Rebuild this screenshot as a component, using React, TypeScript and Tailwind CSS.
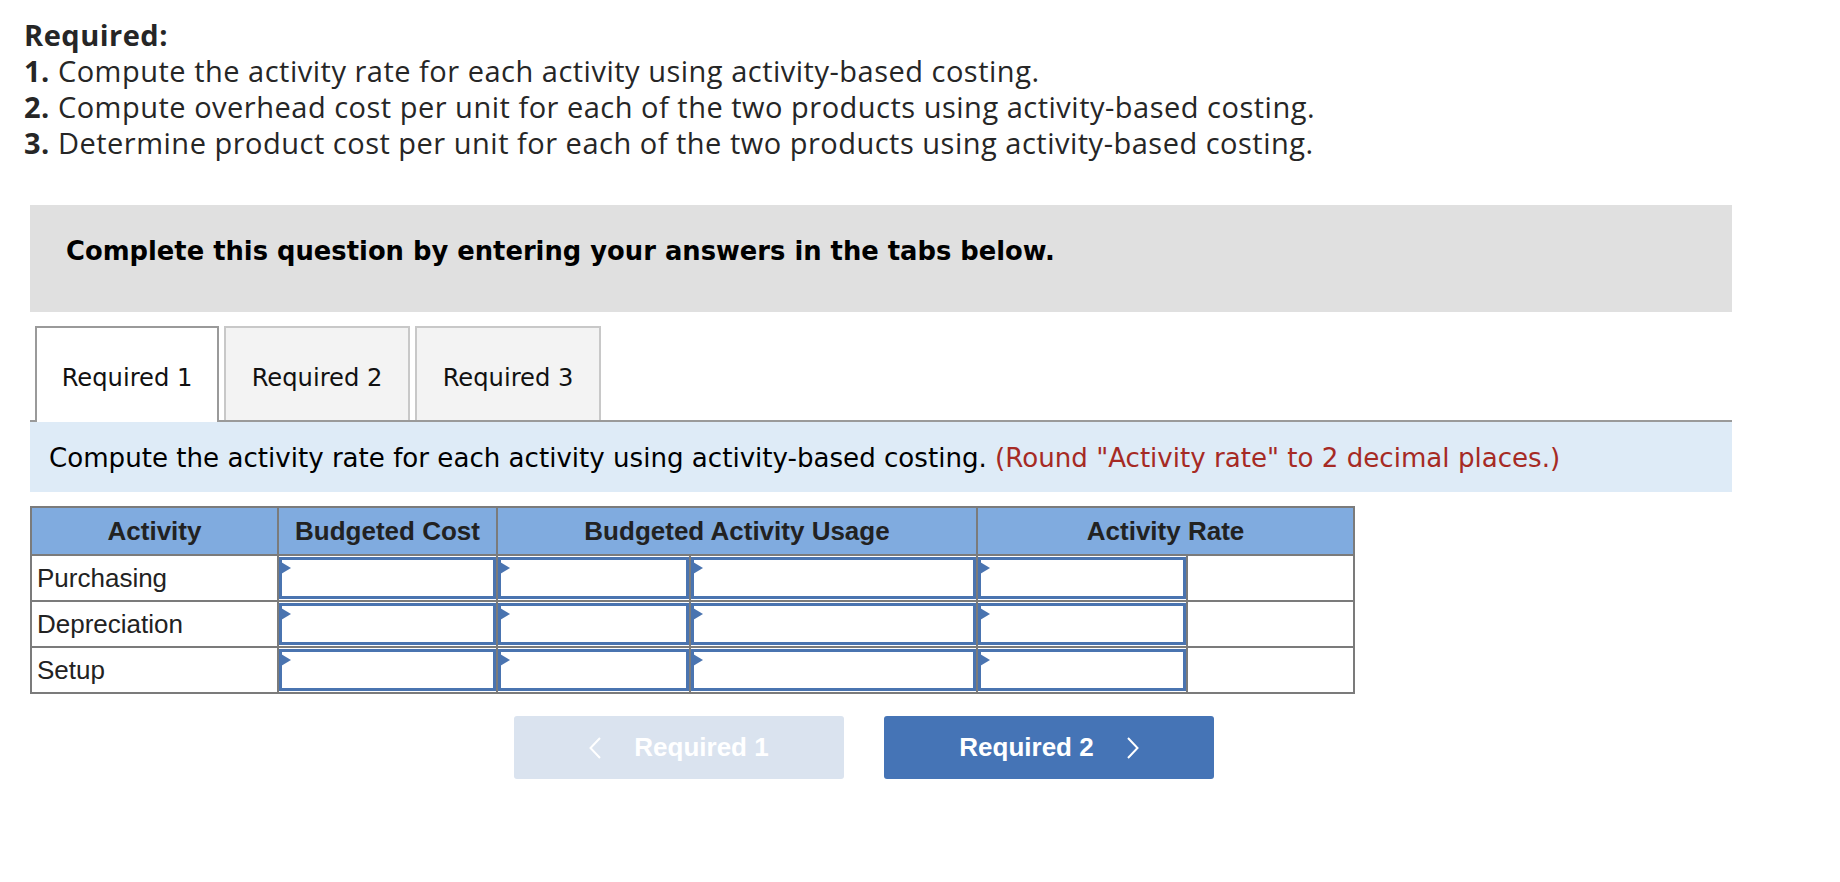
import React from 'react'

const questions = [
    { n: '1.', text: 'Compute the activity rate for each activity using activity-based costing.' },
    { n: '2.', text: 'Compute overhead cost per unit for each of the two products using activity-based costing.' },
    { n: '3.', text: 'Determine product cost per unit for each of the two products using activity-based costing.' },
]

const activities = ['Purchasing', 'Depreciation', 'Setup']

function InputCell() {
    return (
        <td className="p-0 border-2 border-[#7b7b7b]">
            <div className="relative h-[42px] border-[3px] border-[#4a74b0] bg-white">
                <span className="absolute left-[-1px] top-[2px] w-0 h-0 border-y-[6px] border-y-transparent border-l-[10px] border-l-[#4a74b0]" />
            </div>
        </td>
    )
}

function Chevron({ dir }: { dir: 'left' | 'right' }) {
    return (
        <svg width="12" height="22" viewBox="0 0 12 22" fill="none" stroke="white" strokeWidth="2">
            {dir === 'left' ? <polyline points="11,1 1.5,11 11,21" /> : <polyline points="1,1 10.5,11 1,21" />}
        </svg>
    )
}

export default function App() {
    return (
        <div className="min-h-screen w-full bg-white pt-[17px]">
            <div className="pl-[24px] font-['Open_Sans',sans-serif] text-[29px] tracking-[0.5px] leading-[36px] text-[#262626]">
                <p className="font-bold">Required:</p>
                {questions.map((q) => (
                    <p key={q.n}>
                        <span className="font-bold">{q.n}</span> {q.text}
                    </p>
                ))}
            </div>

            <div className="ml-[30px] mt-[44px] w-[1702px] h-[107px] bg-[#e0e0e0] pl-[36px] pt-[31px] font-['DejaVu_Sans',sans-serif] text-[25.8px] leading-[30px] font-bold text-black">
                Complete this question by entering your answers in the tabs below.
            </div>

            <div className="ml-[30px] mt-[14px] w-[1702px] flex gap-[5px] pl-[5px] border-b-2 border-[#9a9a9a] font-['DejaVu_Sans',sans-serif] text-[24.2px] leading-[28px] text-[#111]">
                <div className="w-[184px] h-[96px] -mb-[2px] border-2 border-b-0 border-[#9a9a9a] bg-white text-center pt-[36px]">
                    Required 1
                </div>
                <div className="w-[186px] h-[94px] border-2 border-b-0 border-[#c8c8c8] bg-[#f3f3f3] text-center pt-[36px]">
                    Required 2
                </div>
                <div className="w-[186px] h-[94px] border-2 border-b-0 border-[#c8c8c8] bg-[#f3f3f3] text-center pt-[36px]">
                    Required 3
                </div>
            </div>

            <div className="ml-[30px] w-[1702px] h-[70px] bg-[#deebf7] pl-[19px] pt-[21px] font-['DejaVu_Sans',sans-serif] text-[26.1px] leading-[30px] text-black whitespace-nowrap">
                Compute the activity rate for each activity using activity-based costing.{' '}
                <span className="text-[#a62a24]">(Round "Activity rate" to 2 decimal places.)</span>
            </div>

            <table className="ml-[30px] mt-[14px] w-[1323px] table-fixed border-collapse font-['Liberation_Sans',Arial,sans-serif] text-[26px] text-[#222]">
                <colgroup>
                    <col className="w-[247px]" />
                    <col className="w-[219px]" />
                    <col className="w-[193px]" />
                    <col className="w-[287px]" />
                    <col className="w-[210px]" />
                    <col className="w-[167px]" />
                </colgroup>
                <thead>
                    <tr className="h-[48px] bg-[#80abdf]">
                        <th className="border-2 border-[#7b7b7b] font-bold">Activity</th>
                        <th className="border-2 border-[#7b7b7b] font-bold">Budgeted Cost</th>
                        <th colSpan={2} className="border-2 border-[#7b7b7b] font-bold">Budgeted Activity Usage</th>
                        <th colSpan={2} className="border-2 border-[#7b7b7b] font-bold">Activity Rate</th>
                    </tr>
                </thead>
                <tbody>
                    {activities.map((a) => (
                        <tr key={a} className="h-[46px]">
                            <td className="border-2 border-[#7b7b7b] pl-[5px] leading-[30px]">{a}</td>
                            <InputCell />
                            <InputCell />
                            <InputCell />
                            <InputCell />
                            <td className="border-2 border-[#7b7b7b]" />
                        </tr>
                    ))}
                </tbody>
            </table>

            <div className="mt-[22px] pl-[514px] flex gap-[40px] font-['Liberation_Sans',Arial,sans-serif] text-[26px] font-bold text-white">
                <button className="w-[330px] h-[63px] rounded-[3px] bg-[#dae3ef] flex items-center justify-center gap-[33px]">
                    <Chevron dir="left" />
                    <span>Required 1</span>
                </button>
                <button className="w-[330px] h-[63px] rounded-[3px] bg-[#4574b6] flex items-center justify-center gap-[33px]">
                    <span>Required 2</span>
                    <Chevron dir="right" />
                </button>
            </div>
        </div>
    )
}
